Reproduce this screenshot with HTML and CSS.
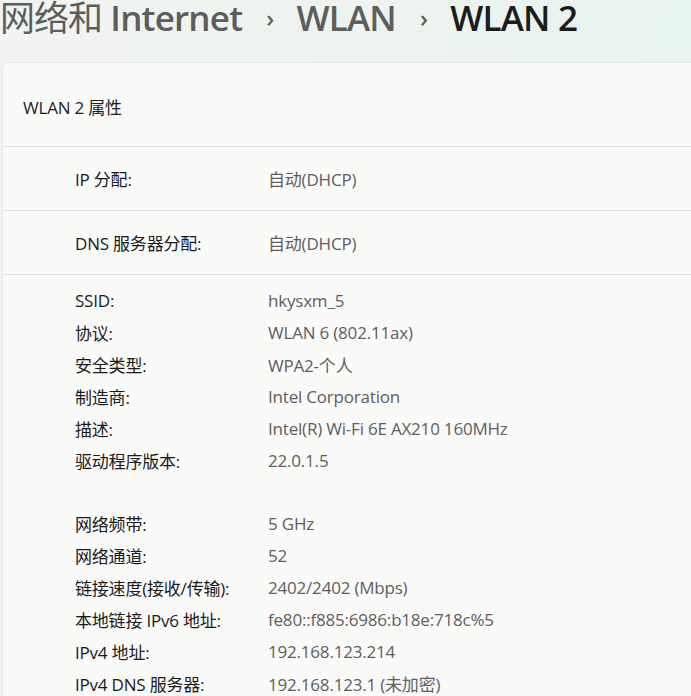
FILE: index.html
```html
<!DOCTYPE html>
<html lang="zh-CN">
<head>
<meta charset="utf-8">
<link rel="stylesheet" href="styles.css">
</head>
<body>
<div class="page">
  <h1 class="crumbs">
    <span class="crumb"><span class="cjk">网络和</span> Internet</span>
    <span class="sep">›</span>
    <span class="crumb">WLAN</span>
    <span class="sep">›</span>
    <span class="crumb current">WLAN 2</span>
  </h1>
  <section class="card">
    <div class="card-head">WLAN 2 属性</div>
    <div class="row"><span class="label">IP 分配:</span><span class="value">自动(DHCP)</span></div>
    <div class="row"><span class="label">DNS 服务器分配:</span><span class="value">自动(DHCP)</span></div>
    <div class="props">
      <dl class="group">
        <div class="prop"><dt>SSID:</dt><dd>hkysxm_5</dd></div>
        <div class="prop"><dt>协议:</dt><dd>WLAN 6 (802.11ax)</dd></div>
        <div class="prop"><dt>安全类型:</dt><dd>WPA2-个人</dd></div>
        <div class="prop"><dt>制造商:</dt><dd>Intel Corporation</dd></div>
        <div class="prop"><dt>描述:</dt><dd>Intel(R) Wi-Fi 6E AX210 160MHz</dd></div>
        <div class="prop"><dt>驱动程序版本:</dt><dd>22.0.1.5</dd></div>
      </dl>
      <dl class="group">
        <div class="prop"><dt>网络频带:</dt><dd>5 GHz</dd></div>
        <div class="prop"><dt>网络通道:</dt><dd>52</dd></div>
        <div class="prop"><dt>链接速度(接收/传输):</dt><dd>2402/2402 (Mbps)</dd></div>
        <div class="prop"><dt>本地链接 IPv6 地址:</dt><dd>fe80::f885:6986:b18e:718c%5</dd></div>
        <div class="prop"><dt>IPv4 地址:</dt><dd>192.168.123.214</dd></div>
        <div class="prop"><dt>IPv4 DNS 服务器:</dt><dd>192.168.123.1 (未加密)</dd></div>
      </dl>
    </div>
  </section>
</div>
</body>
</html>
```
FILE: styles.css
```css
html, body {
  margin: 0;
  padding: 0;
  height: 100%;
  overflow: hidden;
}
body {
  background: linear-gradient(100deg, #f1f3f1 0%, #eef3f0 45%, #e2f4ee 100%);
  font-family: "Open Sans", "Noto Sans CJK SC", sans-serif;
  color: #1b1b1b;
}
.page {
  display: flex;
  flex-direction: column;
}
.crumbs {
  margin: 0;
  height: 62px;
  display: flex;
  align-items: flex-start;
  font-weight: 600;
  font-size: 35px;
  line-height: 36px;
  letter-spacing: -0.8px;
  white-space: nowrap;
}
.crumb {
  color: #5c5e5b;
}
.cjk {
  font-weight: 400;
  letter-spacing: -1px;
}
.crumb.current {
  color: #1c1c1c;
}
.sep {
  color: #5c5e5b;
  font-size: 24px;
  font-weight: 600;
  padding: 0 23px 0 24px;
}
.card {
  margin-left: 2px;
  background: #fafaf9;
  border: 1px solid #e3e4e3;
  border-right: none;
  border-radius: 6px 0 0 0;
  font-size: 17px;
  letter-spacing: -0.2px;
}
.card-head {
  height: 84px;
  display: flex;
  align-items: center;
  padding: 3px 0 0 20px;
  box-sizing: border-box;
  color: #1e1e1e;
  border-bottom: 1px solid #e2e2e2;
}
.row {
  height: 63px;
  display: flex;
  align-items: center;
  border-bottom: 1px solid #e2e2e2;
}
.label, .prop dt {
  width: 193px;
  padding-left: 72px;
  color: #1b1b1b;
  flex: none;
}
.value, .prop dd {
  margin: 0;
  color: #5e5e5e;
}
.props {
  padding: 9px 0 0;
  display: flex;
  flex-direction: column;
  gap: 31px;
}
.group {
  margin: 0;
  display: flex;
  flex-direction: column;
}
.prop {
  display: flex;
  height: 32px;
  align-items: center;
}
```
